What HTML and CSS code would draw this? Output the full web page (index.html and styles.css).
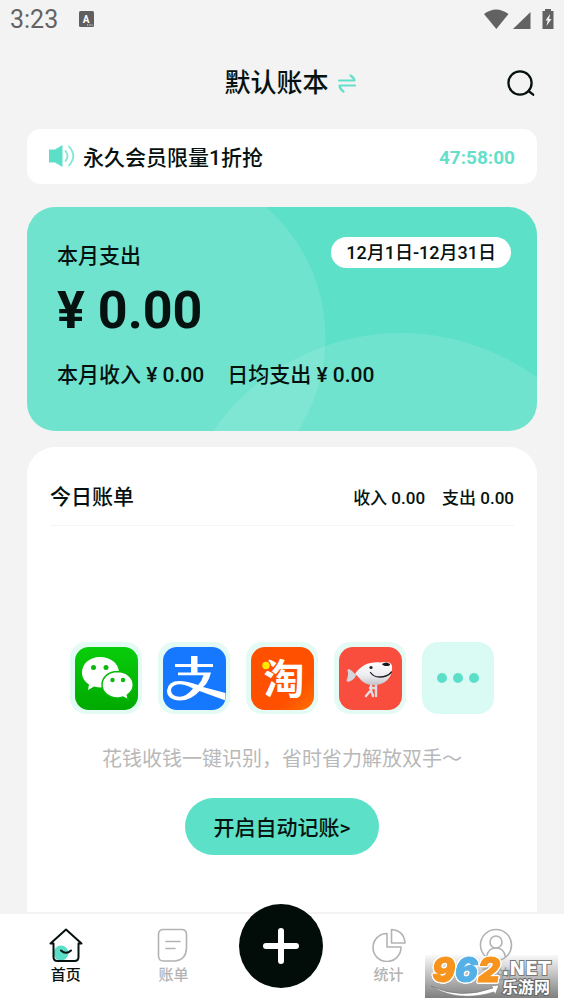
FILE: index.html
```
<!DOCTYPE html>
<html lang="zh-CN">
<head>
<meta charset="utf-8">
<meta name="viewport" content="width=device-width, initial-scale=1">
<title>默认账本</title>
<link rel="stylesheet" href="styles.css">
</head>
<body>
<div class="status">
  <span class="clock">3:23</span>
  <svg class="ime" width="15" height="16" viewBox="0 0 15 16" aria-hidden="true"><rect width="15" height="16" rx="1.5" fill="#5f5f5f"/><text x="7.2" y="11.5" text-anchor="middle" class="ime-letter">A</text><path d="M8 14h1.2M10.4 14h1.2M12.6 14h1" stroke="#f3f3f3" stroke-width="1.2"/></svg>
  <svg class="signals" width="70" height="22" viewBox="0 0 70 22" fill="#626262" aria-hidden="true"><path d="M0 6Q12-3 24.500 6L12.300 21Z"/><path d="M46.500 4v17H29Z"/><path d="M61 1h6v2h2.500v18H58.500V3H61Z"/><path d="M66 6l-4.500 6.500h2.200L62.500 18l5-7h-2.300Z" fill="#f3f3f3"/></svg>
</div>

<header class="header">
  <button class="book" type="button">
    <h1>默认账本</h1>
    <svg width="18" height="20" viewBox="0 0 18 20" fill="none" stroke="#66dfca" stroke-width="2.200" stroke-linecap="round" stroke-linejoin="round" aria-hidden="true"><path d="M1 7.500h15.500Q16 4.500 12.500 2.500M17 12.500H1.500Q2 16.500 5.500 18.500"/></svg>
  </button>
  <button class="search" type="button" aria-label="搜索">
    <svg width="28" height="28" viewBox="0 0 28 28" fill="none" stroke="#06120f" stroke-width="2.300" stroke-linecap="round" aria-hidden="true"><circle cx="13" cy="14" r="11.600"/><path d="M21.500 22l4.700 3.700"/></svg>
  </button>
</header>

<main class="main">
  <a class="promo" href="#member">
    <svg width="26" height="24" viewBox="0 0 26 24" aria-hidden="true"><path d="M0 5.500h6L13.500 1v22L6 18.500H0Z" fill="#5cdfc8"/><g fill="none" stroke="#83e7d5" stroke-width="1.800" stroke-linecap="round"><path d="M16.500 7q4 5 0 10M20 2.500q8.500 9.500 0 19"/></g></svg>
    <span>永久会员限量1折抢</span>
    <time class="countdown">47:58:00</time>
  </a>

  <section class="summary">
    <svg class="rings" viewBox="0 0 510 224" preserveAspectRatio="none" fill="#fff" fill-opacity=".12" aria-hidden="true"><path d="M0 0H239A173 173 0 0 1 271 224H0Z"/><circle cx="374" cy="355" r="229"/></svg>
    <div class="summary-top"><h2>本月支出</h2><button class="period" type="button">12月1日-12月31日</button></div>
    <p class="total">¥ 0.00</p>
    <p class="figures"><span>本月收入 ¥ 0.00</span><span>日均支出 ¥ 0.00</span></p>
  </section>

  <section class="today">
    <div class="today-head"><h2>今日账单</h2><p><span>收入 0.00</span><span>支出 0.00</span></p></div>
    <div class="auto">
      <ul class="apps">
        <li><svg viewBox="0 0 63 63" role="img" aria-label="微信"><defs><linearGradient id="green" x2="0" y2="1"><stop stop-color="#08cd0b"/><stop offset="1" stop-color="#00a900"/></linearGradient></defs><rect width="63" height="63" rx="14" fill="url(#green)"/><path d="M25 10C14.500 10 7 17 7 25.500c0 5 2.500 9 7 12l-1 5.500 6-3.500q3.500 1 7 1c10 0 18-6.500 18-15S36 10 25 10Z" fill="#fff"/><path d="M42.500 24.500c-9 0-15.500 6-15.500 13.300S33.500 51 42.500 51q3 0 5.500-1l5.500 3-1.200-5c3.700-2.500 6-6 6-10.200 0-7.300-7-13.300-15.800-13.300Z" fill="#fff" stroke="#06bb08" stroke-width="1.500"/><g fill="#08b90b"><circle cx="18.500" cy="20.500" r="2.500"/><circle cx="31" cy="20.500" r="2.500"/><circle cx="37.500" cy="33" r="2.200"/><circle cx="48" cy="33" r="2.200"/></g></svg></li>
        <li><svg viewBox="0 0 63 63" role="img" aria-label="支付宝"><rect width="63" height="63" rx="14" fill="#1677ff"/><path d="M28 9h6.500v8H50v3H34.500v6H28v-6H12v-3h16Z" fill="#fff"/><path d="M15 25.500h33Q45 36.500 40 40L62.500 46v7.500L36.500 44Q28 53.500 17 53.500 4 53 4 43.500 5 34 16 34q8 0 19 4 4-4 5.500-9.700H15ZM30 41.500Q20 36.500 14 37.500 8 39 8 43.500q.5 6 8.500 6.200 7 0 13.500-8.200Z" fill="#fff" fill-rule="evenodd"/></svg></li>
        <li><svg viewBox="0 0 63 63" role="img" aria-label="淘宝"><defs><linearGradient id="orange" x2="1" y2="1"><stop offset=".7" stop-color="#ff5000"/><stop offset="1" stop-color="#ff7100"/></linearGradient></defs><rect width="63" height="63" rx="14" fill="url(#orange)"/><text x="33" y="47" text-anchor="middle" class="tao">淘</text><circle cx="15" cy="18.500" r="5" fill="#ff5000"/><circle cx="15" cy="18.500" r="3.700" fill="#ffe900"/></svg></li>
        <li><svg viewBox="0 0 63 63" role="img" aria-label="京东"><defs><linearGradient id="silver" x2="0" y2="1"><stop stop-color="#fff"/><stop offset=".6" stop-color="#ececf0"/><stop offset="1" stop-color="#c2c2ca"/></linearGradient></defs><rect width="63" height="63" rx="14" fill="#f94d3d"/><path d="M17 28Q9 19 8.500 23.500 10 28 7.500 33q0 2.500 3 1.500Q16 32 17 28Z" fill="#d5d5dc"/><path d="M32 38v5l-5 6M32 43l2 6M37 38v11M31 41h6" fill="none" stroke="#dcdce2" stroke-width="2.400" stroke-linecap="round"/><path d="M16 27C22 18 31 14.500 41 15.500q4-1 9 0 4 1.500 3 7.500C52 33 43 39 34 38q-9-.5-13-6-2-3-5-5Z" fill="url(#silver)"/><path d="M43 17q4-3 8 0 0 2-3 2-4 0-5-2Z" fill="#181818"/><circle cx="32" cy="20.500" r="1.600" fill="#222"/><path d="M31.500 25.500q3 4.500 9 4.500 8 0 12-5" fill="none" stroke="#222" stroke-width="1.300" stroke-linecap="round"/></svg></li>
        <li class="more" aria-label="更多"><i></i><i></i><i></i></li>
      </ul>
      <p class="hint">花钱收钱一键识别，省时省力解放双手～</p>
      <button class="start" type="button">开启自动记账&gt;</button>
    </div>
  </section>
</main>

<nav class="tabs">
  <a class="tab active" href="#home"><svg viewBox="0 0 34 34" aria-hidden="true"><circle cx="12" cy="25" r="7.500" fill="#5cdfc8" stroke="none"/><path d="M4.500 15.500H1.500L17 1.500l15.500 14h-3v13.500q0 4-4 4h-17q-4 0-4-4V15.500M12 22.500q5 4.500 10 0"/></svg>首页</a>
  <a class="tab" href="#bills"><svg viewBox="0 0 34 34" aria-hidden="true"><path d="M7.500 1.500h18q5 0 5 5V20Q30 32 19 33H7.500q-5 0-5-5V6.500q0-5 5-5ZM10 13.500h14M10 20.500h9"/></svg>账单</a>
  <button class="add" type="button" aria-label="记一笔"><svg viewBox="0 0 84 84" aria-hidden="true"><path d="M42 27v30M27 42h30"/></svg></button>
  <a class="tab" href="#stats"><svg viewBox="0 0 34 34" aria-hidden="true"><path d="M15 5.500v13.500h14A14 14 0 1 1 15 5.500ZM19.500 1.500q12.500 1 13.500 13.500H19.500Z"/></svg>统计</a>
  <a class="tab" href="#me"><svg viewBox="0 0 34 34" aria-hidden="true"><circle cx="17" cy="17" r="15.500"/><circle cx="17" cy="14" r="6"/><path d="M7.500 29Q9 20 17 20t9.500 9"/></svg>我的</a>
</nav>

<svg class="mark" width="133" height="43" viewBox="0 0 133 43" role="img" aria-label="962.NET 乐游网">
  <path d="M6 31q29 14 62 2l-2-2 8-1-4 10-1-3Q33 48 6 31Z" fill="#fff" stroke="#777" stroke-width=".6"/>
  <text x="7" y="27" class="nine"><tspan class="warm">9</tspan><tspan class="cool">6</tspan><tspan class="warm">2</tspan></text>
  <text x="77" y="20" class="net">.NET</text>
  <text x="77" y="38" class="site">乐游网</text>
</svg>
</body>
</html>
```
FILE: styles.css
```
* { box-sizing: border-box; }

body {
  margin: 0;
  min-height: 100vh;
  display: flex;
  flex-direction: column;
  position: relative;
  background: #f3f3f3;
  color: #06120f;
  font-family: Roboto, "Noto Sans CJK SC", sans-serif;
  font-weight: 500;
}

h1, h2, p, ul { margin: 0; padding: 0; font-weight: inherit; }
button { font: inherit; color: inherit; border: 0; padding: 0; background: none; }
a { color: inherit; text-decoration: none; }
svg { display: block; flex: none; }

.status { display: flex; align-items: center; height: 38px; padding: 0 10px; }
.clock { font-size: 25px; font-weight: 400; color: #636363; }
.ime { margin-left: 21px; }
.ime-letter { font: 700 10px Roboto, sans-serif; fill: #fff; }
.signals { margin-left: auto; }

.header {
  display: grid;
  grid-template-columns: 1fr auto 1fr;
  align-items: center;
  height: 91px;
  padding: 0 29px 2px;
}
.book { grid-column: 2; display: flex; align-items: center; gap: 9px; margin-left: 16px; }
.book h1 { font-size: 26px; line-height: 38px; }
.search { justify-self: end; }

.main { flex: 1; display: flex; flex-direction: column; padding: 0 27px 2px; }

.promo {
  display: flex;
  align-items: center;
  gap: 8px;
  height: 55px;
  padding: 0 22px 1px;
  border-radius: 14px;
  background: #fff;
  font-size: 21px;
}
.countdown { margin-left: auto; padding-top: 2px; font-size: 19px; font-weight: 700; color: #66dfca; }

.summary {
  position: relative;
  overflow: hidden;
  margin-top: 23px;
  padding: 30px 26px 40px 30px;
  border-radius: 28px;
  background: #5ce0c8;
  font-size: 21px;
}
.rings { position: absolute; inset: 0; width: 100%; height: 100%; }
.summary-top, .total, .figures { position: relative; }
.summary-top { display: flex; justify-content: space-between; align-items: flex-start; }
.summary h2 { font-size: 21px; line-height: 38px; }
.period {
  height: 31px;
  padding: 0 15px;
  border-radius: 16px;
  background: #fff;
  font-size: 18px;
  line-height: 30px;
}
.total { font-size: 52px; line-height: 72px; font-weight: 700; }
.figures { display: flex; gap: 23px; margin-top: 12px; line-height: 32px; }

.today { flex: 1; margin-top: 16px; padding: 24px 23px; border-radius: 28px 28px 0 0; background: #fff; }
.today-head {
  display: flex;
  justify-content: space-between;
  align-items: center;
  height: 55px;
  padding-bottom: 6px;
  border-bottom: 1px solid #f5f5f5;
}
.today-head h2 { font-size: 21px; }
.today-head p { display: flex; gap: 17px; padding-top: 2px; font-size: 17px; }

.auto { display: flex; flex-direction: column; align-items: center; padding-top: 116px; }
.apps { display: flex; gap: 16px; list-style: none; }
.apps li {
  display: flex;
  align-items: center;
  justify-content: center;
  width: 72px;
  height: 72px;
  border-radius: 16px;
  background: #e3faf5;
}
.apps svg { width: 63px; height: 63px; }
.tao { font: 700 41px "Noto Sans CJK SC", sans-serif; fill: #fff; }
.apps .more { gap: 6px; background: #dafbf4; }
.more i { width: 10px; height: 10px; border-radius: 50%; background: #5cdfc8; }
.hint { margin-top: 30px; font-size: 20px; line-height: 30px; font-weight: 400; color: #b8b8b8; }
.start {
  margin-top: 24px;
  height: 57px;
  padding: 0 29px 1px;
  border-radius: 29px;
  background: #5ce0c8;
  font-size: 21px;
}

.tabs {
  display: grid;
  grid-template-columns: repeat(5, 1fr);
  height: 90px;
  padding: 0 14px 0 12px;
  background: #fff;
}
.tab {
  display: flex;
  flex-direction: column;
  align-items: center;
  gap: 1px;
  padding-top: 14px;
  font-size: 15px;
  line-height: 24px;
  color: #b3b3b3;
}
.tab svg { width: 34px; height: 34px; fill: none; stroke: currentColor; stroke-width: 1.6; stroke-linecap: round; stroke-linejoin: round; }
.tab.active { color: #06120f; }
.tab.active svg { stroke-width: 2; }
.add { justify-self: center; width: 84px; height: 84px; margin-top: -10px; border-radius: 50%; background: #020c08; }
.add path { stroke: #fff; stroke-width: 6; stroke-linecap: round; }

.mark {
  position: absolute;
  right: 6px;
  bottom: 6px;
  background: linear-gradient(rgba(200, 200, 200, 0.1), rgba(120, 120, 120, 0.95));
}
.nine {
  font: italic 900 34px Inter, "DejaVu Sans", sans-serif;
  stroke-width: 1;
  filter: drop-shadow(1px 0 0 #fff) drop-shadow(-1px 0 0 #fff) drop-shadow(0 1px 0 #fff) drop-shadow(0 -1px 0 #fff);
}
.warm { fill: #f7941d; stroke: #f7941d; }
.cool { fill: #55b0e6; stroke: #55b0e6; }
.net { font: 700 19px "DejaVu Sans", sans-serif; fill: #fff; stroke: #777; stroke-width: 2; paint-order: stroke; }
.site { font: 700 16px "Noto Sans CJK SC", sans-serif; fill: #fff; stroke: #666; stroke-width: 2; paint-order: stroke; }
```
